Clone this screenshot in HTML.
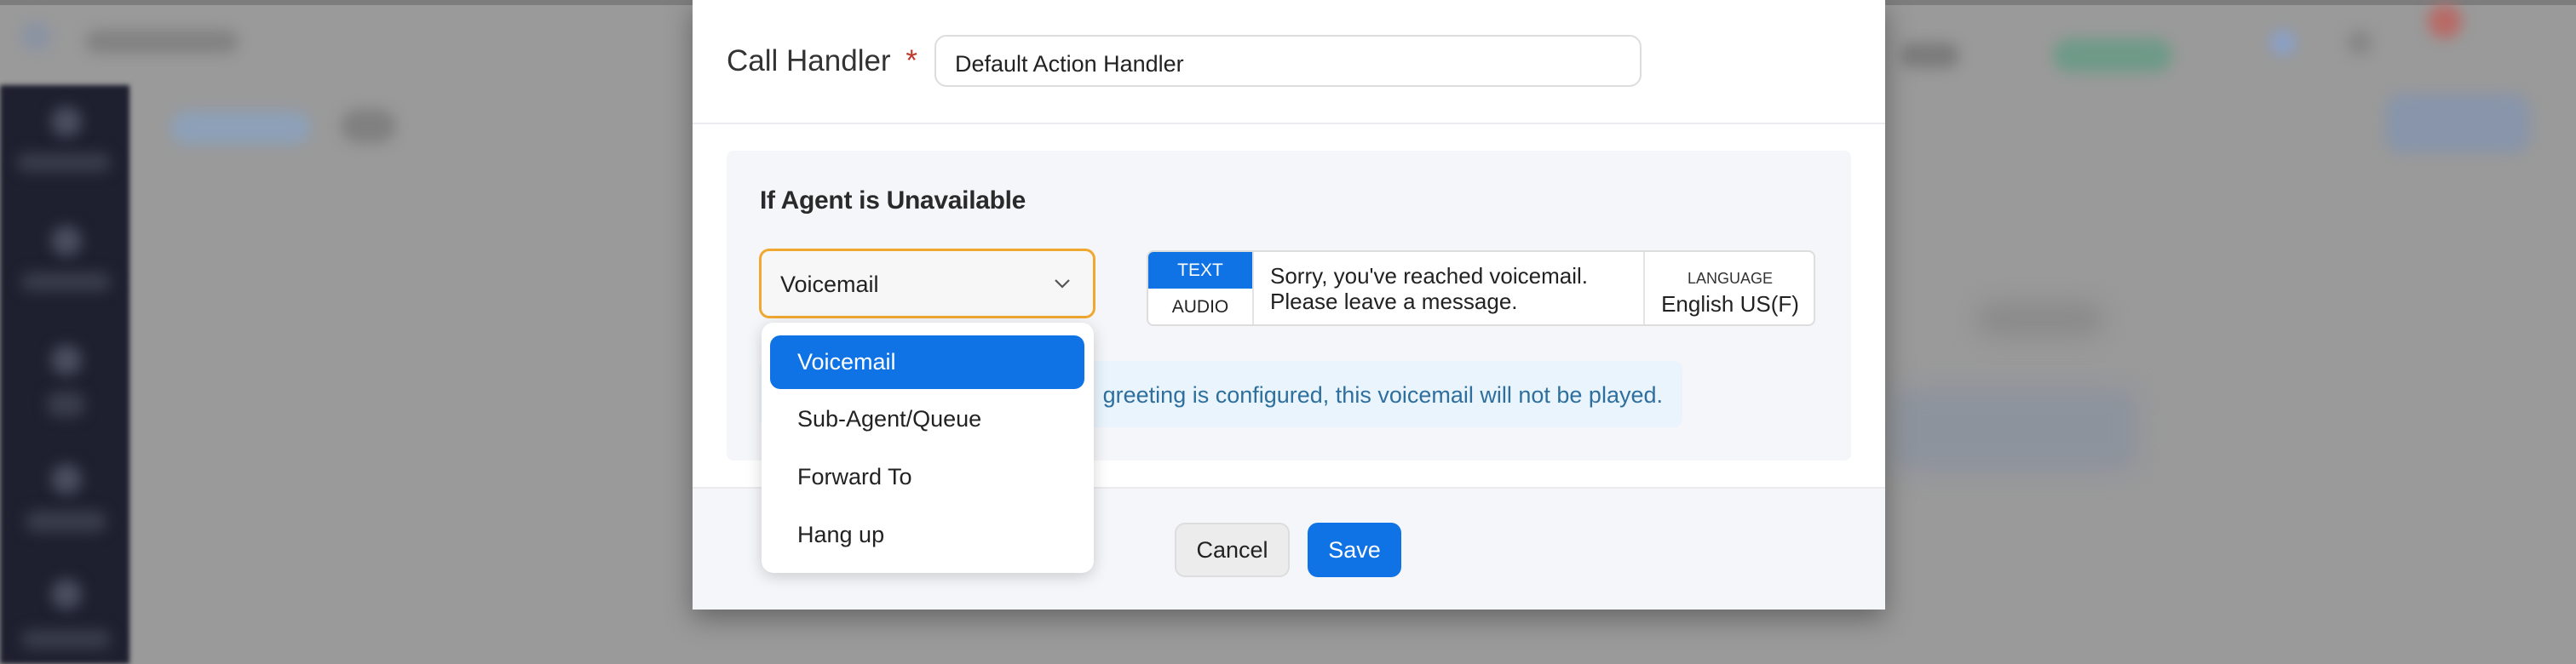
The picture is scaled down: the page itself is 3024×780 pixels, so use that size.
<!DOCTYPE html>
<html><head><meta charset="utf-8"><style>
*{margin:0;padding:0;box-sizing:border-box}
body{width:3024px;height:780px;overflow:hidden;background:#9a9a9a;font-family:"Liberation Sans",sans-serif;position:relative}
.a{position:absolute}
.bl{position:absolute;filter:blur(8px);border-radius:20px}
</style></head><body>
<div class="a" style="left:0;top:0;width:3024px;height:6px;background:#7d7d7d"></div>
<div class="a" style="left:0;top:100px;width:152px;height:680px;background:#1e2030;filter:blur(3px)"></div>
<div class="bl" style="left:60px;top:125px;width:36px;height:36px;background:#4a4e5e;border-radius:50%"></div>
<div class="bl" style="left:20px;top:180px;width:110px;height:22px;background:#3a3d4c"></div>
<div class="bl" style="left:60px;top:265px;width:36px;height:36px;background:#4a4e5e;border-radius:50%"></div>
<div class="bl" style="left:25px;top:320px;width:105px;height:22px;background:#3a3d4c"></div>
<div class="bl" style="left:60px;top:405px;width:36px;height:36px;background:#4a4e5e;border-radius:50%"></div>
<div class="bl" style="left:55px;top:460px;width:45px;height:30px;background:#3a3d4c"></div>
<div class="bl" style="left:60px;top:545px;width:36px;height:36px;background:#4a4e5e;border-radius:50%"></div>
<div class="bl" style="left:30px;top:600px;width:95px;height:25px;background:#3a3d4c"></div>
<div class="bl" style="left:60px;top:680px;width:36px;height:36px;background:#4a4e5e;border-radius:50%"></div>
<div class="bl" style="left:25px;top:740px;width:105px;height:22px;background:#3a3d4c"></div>
<div class="bl" style="left:25px;top:25px;width:35px;height:35px;background:#8a93a3;border-radius:50%"></div>
<div class="bl" style="left:100px;top:35px;width:180px;height:28px;background:#828282"></div>
<div class="bl" style="left:200px;top:130px;width:165px;height:40px;background:#8da0b8"></div>
<div class="bl" style="left:400px;top:128px;width:65px;height:40px;background:#808080"></div>
<div class="bl" style="left:2410px;top:45px;width:140px;height:40px;background:#6f9a88"></div>
<div class="bl" style="left:2230px;top:50px;width:70px;height:30px;background:#7b7b7b"></div>
<div class="bl" style="left:2665px;top:35px;width:30px;height:30px;background:#8aa0c8;border-radius:50%"></div>
<div class="bl" style="left:2755px;top:35px;width:30px;height:30px;background:#878787;border-radius:50%"></div>
<div class="bl" style="left:2850px;top:5px;width:40px;height:40px;background:#b86a66;border-radius:50%"></div>
<div class="bl" style="left:2800px;top:110px;width:170px;height:70px;background:#8895aa"></div>
<div class="bl" style="left:2320px;top:355px;width:150px;height:40px;background:#8a8a8a;filter:blur(14px)"></div>
<div class="bl" style="left:2220px;top:455px;width:290px;height:100px;background:#8d939d;filter:blur(14px)"></div>
<!-- modal -->
<div class="a" style="left:813px;top:0;width:1400px;height:716px;background:#fff;box-shadow:0 10px 30px rgba(0,0,0,.35)"></div>
<div class="a" style="left:853px;top:52px;font-size:35px;color:#333">Call Handler <span style="color:#c0392b;margin-left:8px">*</span></div>
<div class="a" style="left:1097px;top:41px;width:830px;height:61px;border:2px solid #ddd;border-radius:14px;font-size:27px;color:#222;padding:17px 0 0 22px">Default Action Handler</div>
<div class="a" style="left:813px;top:144px;width:1400px;height:2px;background:#ececf0"></div>
<div class="a" style="left:853px;top:177px;width:1320px;height:364px;background:#f5f6fa;border-radius:8px"></div>
<div class="a" style="left:892px;top:219px;font-size:30px;font-weight:bold;color:#2a2a2a;letter-spacing:-0.3px">If Agent is Unavailable</div>
<div class="a" style="left:891px;top:292px;width:395px;height:82px;border:3px solid #f0a830;border-radius:12px;background:#f7f7f7;font-size:27px;color:#222;padding:24px 0 0 22px">Voicemail</div>
<svg class="a" style="left:1236px;top:326px" width="22" height="14" viewBox="0 0 22 14"><path d="M3 3l8 8 8-8" fill="none" stroke="#555" stroke-width="2.2"/></svg>
<div class="a" style="left:1346px;top:294px;width:785px;height:89px;border:2px solid #ddd;border-radius:8px;background:#fff;overflow:hidden">
 <div class="a" style="left:0;top:0;width:122px;height:43px;background:#0f73e6;color:#fff;font-size:21px;text-align:center;line-height:43px">TEXT</div>
 <div class="a" style="left:0;top:43px;width:122px;height:44px;color:#222;font-size:21px;text-align:center;line-height:44px">AUDIO</div>
 <div class="a" style="left:122px;top:0;width:2px;height:89px;background:#e4e4e4"></div>
 <div class="a" style="left:143px;top:13px;font-size:26px;line-height:30px;color:#222">Sorry, you've reached voicemail.<br>Please leave a message.</div>
 <div class="a" style="left:581px;top:0;width:2px;height:89px;background:#e4e4e4"></div>
 <div class="a" style="left:583px;top:21px;width:200px;text-align:center;font-size:18px;color:#333">LANGUAGE</div>
 <div class="a" style="left:583px;top:46px;width:200px;text-align:center;font-size:26px;color:#222">English US(F)</div>
</div>
<div class="a" style="left:891px;top:424px;width:1084px;height:78px;background:#eaf4fd;border-radius:10px"></div>
<div class="a" style="left:1000px;top:449px;width:952px;text-align:right;font-size:27px;color:#2e6f9e;white-space:nowrap">greeting is configured, this voicemail will not be played.</div>
<div class="a" style="left:813px;top:572px;width:1400px;height:144px;background:#f5f6fa;border-top:2px solid #ebebef"></div>
<div class="a" style="left:1379px;top:614px;width:135px;height:64px;background:#ececec;border:2px solid #ddd;border-radius:12px;font-size:27px;color:#222;text-align:center;line-height:60px">Cancel</div>
<div class="a" style="left:1535px;top:614px;width:110px;height:64px;background:#0f73e6;border-radius:12px;font-size:27px;color:#fff;text-align:center;line-height:64px">Save</div>
<!-- dropdown -->
<div class="a" style="left:894px;top:379px;width:390px;height:294px;background:#fff;border-radius:14px;box-shadow:0 4px 18px rgba(0,0,0,.18)"></div>
<div class="a" style="left:904px;top:394px;width:369px;height:63px;background:#0f73e6;border-radius:12px"></div>
<div class="a" style="left:936px;top:410px;font-size:27px;color:#fff">Voicemail</div>
<div class="a" style="left:936px;top:477px;font-size:27px;color:#222">Sub-Agent/Queue</div>
<div class="a" style="left:936px;top:545px;font-size:27px;color:#222">Forward To</div>
<div class="a" style="left:936px;top:613px;font-size:27px;color:#222">Hang up</div>
</body></html>
